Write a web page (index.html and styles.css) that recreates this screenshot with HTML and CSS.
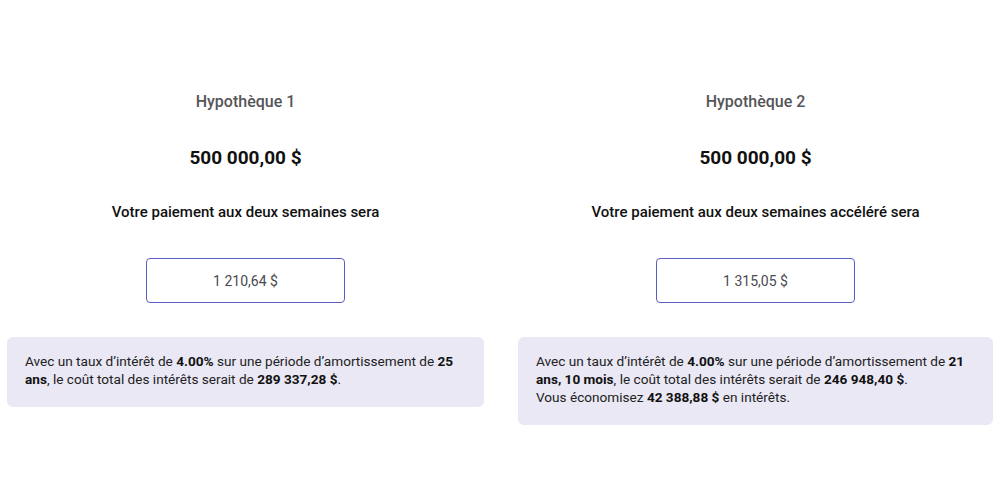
FILE: index.html
```html
<!DOCTYPE html>
<html lang="fr">
<head>
<meta charset="utf-8">
<link rel="stylesheet" href="styles.css">
</head>
<body>
<main class="compare">
  <section class="col">
    <h2 class="title">Hypothèque 1</h2>
    <p class="amount">500 000,00 $</p>
    <p class="label">Votre paiement aux deux semaines sera</p>
    <div class="result">1 210,64 $</div>
    <div class="note">
      Avec un taux d’intérêt de <b>4.00%</b> sur une période d’amortissement de <b>25 ans</b>, le coût total des intérêts serait de <b>289 337,28 $</b>.
    </div>
  </section>
  <section class="col">
    <h2 class="title">Hypothèque 2</h2>
    <p class="amount">500 000,00 $</p>
    <p class="label">Votre paiement aux deux semaines accéléré sera</p>
    <div class="result">1 315,05 $</div>
    <div class="note">
      Avec un taux d’intérêt de <b>4.00%</b> sur une période d’amortissement de <b>21 ans, 10 mois</b>, le coût total des intérêts serait de <b>246 948,40 $</b>.<br>
      Vous économisez <b>42 388,88 $</b> en intérêts.
    </div>
  </section>
</main>
</body>
</html>
```
FILE: styles.css
```css
html, body {
  margin: 0;
  padding: 0;
  background: #ffffff;
}
body {
  font-family: Roboto, "Liberation Sans", sans-serif;
  color: #1a1a1a;
}
.compare {
  display: grid;
  grid-template-columns: 477px 475px;
  column-gap: 34px;
  padding: 92px 0 0 7px;
  align-items: start;
}
.col {
  display: flex;
  flex-direction: column;
  align-items: center;
}
.title {
  margin: 0;
  font-size: 16px;
  line-height: 20px;
  font-weight: 500;
  color: #555558;
}
.amount {
  margin: 34px 0 0;
  font-size: 19px;
  line-height: 24px;
  font-weight: 700;
  color: #111;
}
.label {
  margin: 33px 0 0;
  font-size: 15px;
  line-height: 18px;
  font-weight: 500;
  color: #111;
}
.result {
  margin-top: 37px;
  box-sizing: border-box;
  width: 199px;
  height: 45px;
  border: 1px solid #5a5ec4;
  border-radius: 4px;
  display: flex;
  align-items: center;
  justify-content: center;
  font-size: 14px;
  color: #4a4a4f;
}
.note {
  margin-top: 34px;
  align-self: stretch;
  background: #eae8f4;
  border-radius: 6px;
  padding: 15px 18px 19px;
  font-size: 13.6px;
  line-height: 18px;
  color: #222;
}
.note b {
  font-weight: 700;
  color: #111;
}
```
